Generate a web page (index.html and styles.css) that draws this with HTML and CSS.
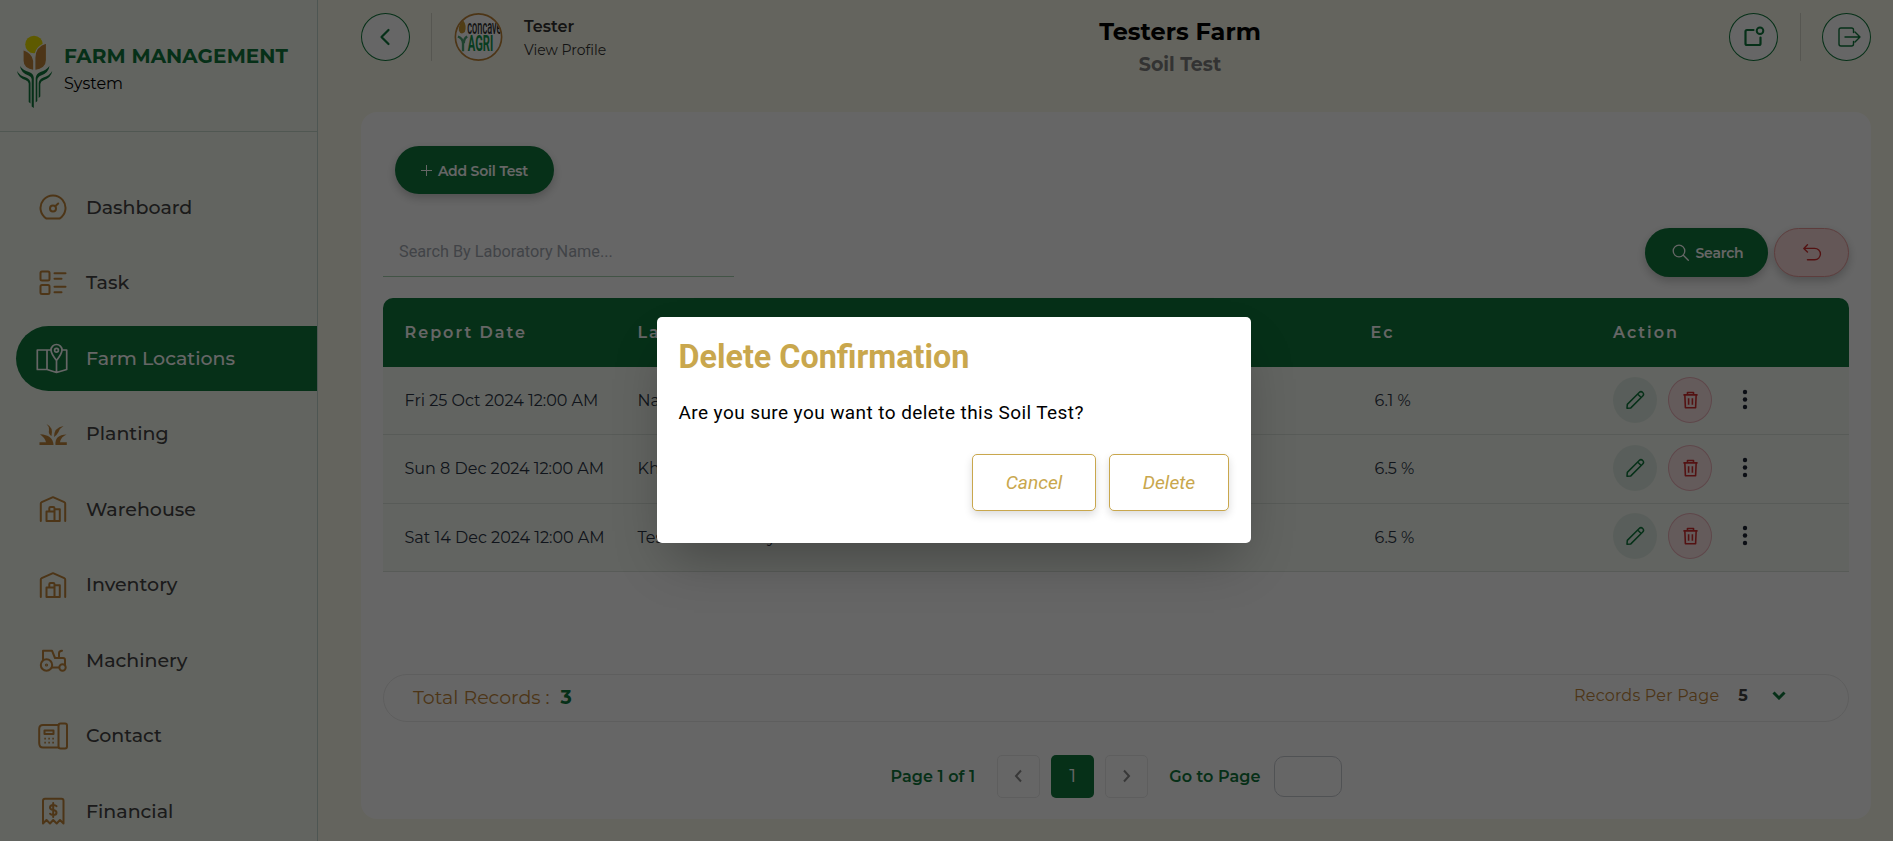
FILE: index.html
```html
<!DOCTYPE html>
<html lang="en">
<head>
<meta charset="utf-8">
<title>Soil Test</title>
<link rel="stylesheet" href="styles.css">
</head>
<body>
<svg class="defs" aria-hidden="true">
  <symbol id="barn" viewBox="0 0 28 28"><path d="M1.800 26V8.500Q1.800 7.600 2.700 7.200L14 2.200 25.300 7.200Q26.200 7.600 26.200 8.500V26"/><path d="M7.500 16.500H15.500V26H7.500ZM10.300 16.500V13.200Q10.300 12 11.500 12H14.300Q15.500 12 15.500 13.200V26M15.500 14.200H20.800V26H15.500"/></symbol>
  <symbol id="pen" viewBox="0 0 20 20"><path d="M2 18.200L2.300 14.400 14.200 2.500A2.400 2.400 0 0 1 17.700 6L5.800 17.900ZM12.900 4.200L15.900 7.200"/></symbol>
  <symbol id="bin" viewBox="0 0 18 20"><path d="M1.500 4.600H16.500M5.800 4.400V2H12.200V4.400M3 4.600L3.600 18.200H14.400L15 4.600M7 8.200V15M11 8.200V15"/></symbol>
  <symbol id="dots" viewBox="0 0 6 22"><circle cx="3" cy="3" r="2.200"/><circle cx="3" cy="10.500" r="2.200"/><circle cx="3" cy="18" r="2.200"/></symbol>
</svg>
<div class="app">
  <aside class="sidebar">
    <div class="brand">
      <svg class="logo" width="38" height="74" viewBox="0 0 38 74">
        <circle cx="19" cy="9.500" r="8.800" fill="#ece000"/>
        <path d="M8 14.500Q18 18 18.800 26V35.500Q8 34 8 26ZM31.500 8Q20 11 19.800 23V35.500Q31.500 34 31.500 25Z" fill="#c0863a" stroke="#f5f9f0" stroke-width="1.200"/>
        <g fill="#0f783c"><path d="M5 31Q8 35.500 14 37Q18.600 38.500 18.800 43V73L16.700 71.500V44Q16.500 41.500 13.500 40.500Q6 38 5 31ZM34.500 31Q31 35.500 25.500 37Q21.200 38.500 20.700 43V67.500L22.300 66V45Q22.500 42 26 40.500Q33.500 38 34.500 31ZM2 36Q5 41 11 42.500Q15.300 44 15.500 48V68.500L13.700 67V48.500Q13.500 46 10.500 45Q3 42.500 2 36ZM37.300 36Q34 41 28.500 42.500Q24 44 23.700 48V63L25.300 61.500V49Q25.500 46.500 28.500 45.200Q36 43 37.300 36Z"/></g>
      </svg>
      <div class="brand-text"><div class="brand-name">FARM MANAGEMENT</div><div class="brand-sub">System</div></div>
    </div>
    <nav class="nav">
      <a class="item"><svg class="ico" viewBox="0 0 28 28"><path d="M7.500 25.600A12.500 12.500 0 1 1 20.500 25.600Z"/><circle cx="14" cy="15.500" r="3"/><path d="M16.200 13.200L19.200 10.500"/></svg><span>Dashboard</span></a>
      <a class="item"><svg class="ico" viewBox="0 0 28 28"><rect x="1.500" y="2.500" width="9" height="9" rx="1.500"/><rect x="1.500" y="16" width="9" height="9" rx="1.500"/><path d="M15.500 4.300H26.500M15.500 9.700H22.500M15.500 17.800H26.500M15.500 23.200H22.500"/></svg><span>Task</span></a>
      <a class="item active"><svg class="ico map" viewBox="0 0 32 32"><path d="M11 8H1.300V27.500H11L20.500 30.500 30.700 27.500V8H26M11 27.500V8H15M20.500 18.500V30.500M20.500 18.500Q15 11.500 15 8A5.500 5.500 0 0 1 26 8Q26 11.500 20.500 18.500Z"/><circle cx="20.500" cy="8.200" r="1.900"/></svg><span>Farm Locations</span></a>
      <a class="item"><svg class="ico solid" viewBox="0 0 28 28"><path d="M.5 25H14.500Q14 15 1 14.300Q6 18 7 22.200H.5ZM16.500 25H27.800V22.200H21Q22 17 27.500 14.600Q15.500 15 16.500 25ZM15 17Q15 7.500 24.500 6Q21 8 19.500 12 18 15 15 17ZM12.500 16Q9 14 10 10 10 6 7.500 4Q14.500 7 12.500 16Z"/></svg><span>Planting</span></a>
      <a class="item"><svg class="ico"><use href="#barn"/></svg><span>Warehouse</span></a>
      <a class="item"><svg class="ico"><use href="#barn"/></svg><span>Inventory</span></a>
      <a class="item"><svg class="ico" viewBox="0 0 28 28"><circle cx="7.500" cy="19" r="5.700"/><circle cx="7.500" cy="19" r=".6"/><circle cx="23.500" cy="21.500" r="3.200"/><path d="M4 13.500V4.700H13L16 12H24Q26 12 26 14V19M13 21.500H20M20 12V7.200Q20 4.700 23 4.700"/></svg><span>Machinery</span></a>
      <a class="item"><svg class="ico phone" viewBox="0 0 30 28"><path d="M20.500 3H5Q1.200 3 1.200 7V21Q1.200 25.500 5 25.500H20.500"/><rect x="20.500" y="1.500" width="8.500" height="25" rx="2"/><rect x="6.500" y="8.500" width="9" height="3.500"/><path class="keys" d="M6.300 16.700h1.600M10.300 16.700h1.600M14.300 16.700h1.600M6.300 20.700h1.600M10.300 20.700h1.600M14.300 20.700h1.600"/></svg><span>Contact</span></a>
      <a class="item"><svg class="ico" viewBox="0 0 28 28"><path d="M4 26.500V3.700Q4 1.700 6 1.700H22.500Q24.500 1.700 24.500 3.700V26.500L21 23 17.700 26.500 14.200 23 11 26.500 7.500 23Z"/><path d="M17.500 9.200Q16.500 8 14.200 8 11 8 11 10.500 11 12.500 14.200 13 17.500 13.500 17.500 15.700 17.500 18 14.200 18 12 18 11 16.700M14.200 6V20"/></svg><span>Financial</span></a>
    </nav>
  </aside>
  <main class="main">
    <header class="top">
      <div class="group">
        <button class="round"><svg class="back" width="12" height="18" viewBox="0 0 12 18"><path d="M9.500 2L2.500 9L9.500 16" stroke-width="2.200"/></svg></button>
        <i class="sep"></i>
        <svg class="avatar" viewBox="0 0 49 49"><clipPath id="disc"><circle cx="24.500" cy="24.500" r="23"/></clipPath><circle cx="24.500" cy="24.500" r="23" fill="#fff"/><g clip-path="url(#disc)"><path d="M8.500 7Q3.500 13 4.500 18 6.500 23 10.500 19.500Q13 13 8.500 7Z" fill="#c89a35"/><path d="M3.500 24Q8.500 26 8.700 31V39M13 24Q9.500 26 9.500 31" fill="none" stroke="#4fa575" stroke-width="2.400"/><text class="av-a" x="13" y="21.500" textLength="35" lengthAdjust="spacingAndGlyphs">concave</text><text class="av-b" x="13.500" y="39" textLength="26" lengthAdjust="spacingAndGlyphs">AGRI</text></g><circle cx="24.500" cy="24.500" r="23.600" fill="none" stroke="#c0863a" stroke-width="1.700"/></svg>
        <div class="user"><b>Tester</b><span>View Profile</span></div>
      </div>
      <div class="title"><h1>Testers Farm</h1><h2>Soil Test</h2></div>
      <div class="group right">
        <button class="round"><svg width="22" height="22" viewBox="0 0 22 22"><path d="M10.500 4H4Q2.500 4 2.500 5.500V17.500Q2.500 19 4 19H16Q17.500 19 17.500 17.500V11.500" stroke-width="2.200"/><circle cx="17" cy="4.800" r="3.300" stroke-width="2"/></svg></button>
        <i class="sep"></i>
        <button class="round"><svg class="out" width="26" height="22" viewBox="0 0 26 22"><path d="M17.500 6.500V4Q17.500 2 15.500 2H5Q3 2 3 4V18Q3 20 5 20H15.500Q17.500 20 17.500 18V15.500M9 11H24M19 6L24 11 19 16" stroke-width="1.400"/></svg></button>
      </div>
    </header>
    <section class="card">
      <button class="btn add"><svg width="11" height="11" viewBox="0 0 11 11"><path d="M5.500 0V11M0 5.500H11"/></svg><span>Add Soil Test</span></button>
      <div class="tools">
        <div class="field">Search By Laboratory Name...</div>
        <div class="actions">
          <button class="btn find"><svg width="17" height="17" viewBox="0 0 17 17"><circle cx="7" cy="7" r="5.800"/><path d="M11.300 11.300L16.300 16.300"/></svg><span>Search</span></button>
          <button class="btn reset"><svg width="22" height="20" viewBox="0 0 22 20"><path d="M6 1.500L2 5.500 6 9.500M2 5.500H14A6.200 6.200 0 0 1 14 18H6"/></svg></button>
        </div>
      </div>
      <div class="table">
        <div class="row head"><span>Report Date</span><span>Laboratory Name</span><span>Ec</span><span>Action</span></div>
        <div class="row"><span>Fri 25 Oct 2024 12:00 AM</span><span>National</span><span class="ec">6.1 %</span><span class="acts"><i class="edit"><svg><use href="#pen"/></svg></i><i class="del"><svg><use href="#bin"/></svg></i><svg class="more"><use href="#dots"/></svg></span></div>
        <div class="row"><span>Sun 8 Dec 2024 12:00 AM</span><span>Khan</span><span class="ec">6.5 %</span><span class="acts"><i class="edit"><svg><use href="#pen"/></svg></i><i class="del"><svg><use href="#bin"/></svg></i><svg class="more"><use href="#dots"/></svg></span></div>
        <div class="row"><span>Sat 14 Dec 2024 12:00 AM</span><span>Tester Laboratory</span><span class="ec">6.5 %</span><span class="acts"><i class="edit"><svg><use href="#pen"/></svg></i><i class="del"><svg><use href="#bin"/></svg></i><svg class="more"><use href="#dots"/></svg></span></div>
      </div>
      <div class="summary">
        <div class="total"><span>Total Records :</span><b>3</b></div>
        <div class="per"><span>Records Per Page</span><b>5</b><svg width="14" height="9" viewBox="0 0 14 9"><path d="M1.500 1.500L7 7L12.500 1.500"/></svg></div>
      </div>
      <div class="pager">
        <span class="pages">Page 1 of 1</span>
        <i class="box"><svg width="9" height="14" viewBox="0 0 9 14"><path d="M7 1.500L2 7 7 12.500"/></svg></i>
        <i class="box on">1</i>
        <i class="box"><svg width="9" height="14" viewBox="0 0 9 14"><path d="M2 1.500L7 7 2 12.500"/></svg></i>
        <span class="goto">Go to Page</span>
        <i class="goin"></i>
      </div>
    </section>
  </main>
</div>
<div class="overlay">
  <div class="modal">
    <h3>Delete Confirmation</h3>
    <p>Are you sure you want to delete this Soil Test?</p>
    <div class="modal-actions"><button class="cancel">Cancel</button><button class="delete">Delete</button></div>
  </div>
</div>
</body>
</html>
```
FILE: styles.css
```css
* { box-sizing: border-box; }
body { margin: 0; height: 841px; overflow: hidden; font-family: Montserrat, Inter, "Open Sans", sans-serif; color: #444; }
h1, h2, h3, p { margin: 0; }
button { font: inherit; padding: 0; }
i { font-style: normal; }
.defs { position: absolute; width: 0; height: 0; }
.app { display: flex; height: 841px; background: #fbfbea; }

.sidebar { width: 318px; flex: none; background: #f5f9f0; border-right: 1px solid #c4d6cf; overflow: hidden; }
.brand { height: 132px; border-bottom: 1px solid #c9d9cd; display: flex; padding: 35px 0 0 15px; gap: 11px; }
.logo { flex: none; }
.brand-name { margin-top: 8px; font-size: 20px; line-height: 26px; font-weight: 700; color: #0f783c; letter-spacing: .1px; white-space: nowrap; }
.brand-sub { margin-top: 2px; font-size: 16px; line-height: 26px; color: #000; }
.nav { padding: 42.600px 0 0 16px; display: flex; flex-direction: column; gap: 10.400px; }
.item { height: 65.150px; flex: none; display: flex; align-items: center; padding-left: 23px; gap: 19px; font-size: 19px; font-weight: 500; color: #444; border-radius: 33px 0 0 33px; }
.ico { width: 28px; height: 28px; flex: none; fill: none; stroke: #c0863a; stroke-width: 2; stroke-linecap: round; stroke-linejoin: round; }
.ico.map { width: 32px; height: 32px; margin: 0 -1px 0 -3px; stroke: #fff; stroke-width: 1.700; }
.ico.phone { width: 30px; margin: 0 -1px; }
.ico .keys { stroke-linecap: butt; stroke-width: 1.700; }
.ico.solid { fill: #c0863a; stroke: none; }
.item.active { background: #0f783c; color: #fff; }

.main { flex: 1; padding: 13px 22px 22px 43px; }
.top { height: 99px; display: grid; grid-template-columns: 1fr auto 1fr; align-items: start; }
.group { display: flex; align-items: center; height: 48px; }
.round { width: 49px; height: 48px; border: 1px solid #0f783c; border-radius: 50%; background: #fff; display: flex; align-items: center; justify-content: center; }
.round svg { fill: none; stroke: #0f783c; stroke-linecap: round; stroke-linejoin: round; }
.round .back { margin-right: 1px; }
.round .out { margin-left: 5px; }
.sep { width: 1px; height: 48px; background: #d6d6ca; margin: 0 22px 0 21px; }
.right { justify-content: flex-end; }
.right .sep { margin: 0 21px 0 22px; }
.avatar { width: 49px; height: 48px; }
.av-a { font: 500 20px Roboto, sans-serif; fill: #333; }
.av-b { font: 700 22px Roboto, sans-serif; fill: #15964f; }
.user { margin-left: 21px; padding-top: 3px; color: #333; display: flex; flex-direction: column; }
.user b { font-size: 16px; line-height: 22px; font-weight: 600; }
.user span { font-size: 14px; line-height: 24px; }
.title { text-align: center; padding-left: 128px; }
.title h1 { font-size: 24px; line-height: 38px; font-weight: 700; color: #000; }
.title h2 { font-size: 19px; line-height: 27px; font-weight: 700; color: #808080; }

.card { height: 707px; background: #fff; border-radius: 16px; padding: 34px 22px 0; }
.btn { border: 0; border-radius: 25px; display: flex; align-items: center; justify-content: center; font-size: 14px; font-weight: 600; color: #fff; background: #0f783c; box-shadow: 0 4px 10px rgba(0,0,0,.22); }
.btn span { letter-spacing: -.2px; padding-top: 1px; }
.btn svg { fill: none; stroke: #fff; stroke-width: 1.300; stroke-linecap: round; }
.add { width: 159px; height: 48px; margin-left: 12px; gap: 6px; }
.add svg { stroke-width: 1; stroke-linecap: butt; }
.tools { margin-top: 34px; height: 49px; display: flex; justify-content: space-between; }
.field { width: 351px; padding-left: 16px; border-bottom: 1px solid #a5d3ae; font: 16.250px/48px Roboto, sans-serif; color: #a4a9b2; }
.actions { display: flex; gap: 6px; }
.find { width: 123px; gap: 7px; padding-left: 2px; }
.reset { width: 75px; background: #f9d9d9; border: 1px solid #e99a9a; }
.reset svg { width: 20px; height: 19px; stroke: #d02f2f; stroke-width: 1.500; stroke-linejoin: round; }

.table { margin-top: 21px; border-radius: 10px 10px 0 0; overflow: hidden; }
.row { height: 68.300px; padding: 0 22px 0 21.500px; display: grid; grid-template-columns: 233px 733px 242.500px 1fr; align-items: center; background: #f5f9f2; border-bottom: 1px solid #dde3dc; font-size: 16px; color: #2a3444; white-space: nowrap; }
.row.head { height: 69px; padding-top: 11px; align-items: start; line-height: 48px; background: #0f783c; color: #fff; border: 0; font-weight: 600; font-size: 16px; letter-spacing: 2px; }
.ec { padding-left: 4px; }
.acts { display: flex; align-items: center; margin-top: -2px; }
.edit, .del { width: 44px; height: 46px; border-radius: 50%; display: flex; align-items: center; justify-content: center; }
.edit { background: #dfece3; margin-right: 11px; }
.del { background: #fbe3e4; border: 1px solid #eab0b8; }
.acts svg { width: 20px; height: 20px; fill: none; stroke: #0f783c; stroke-width: 1.500; stroke-linejoin: round; }
.acts .del svg { width: 17px; stroke: #d02f2f; stroke-width: 1.700; }
.acts .more { width: 6px; height: 22px; margin-left: 30px; fill: #1c2333; stroke: none; }

.summary { margin-top: 102px; height: 48px; border: 1px solid #ebebeb; border-radius: 24px; padding: 0 62px 0 29px; display: flex; justify-content: space-between; align-items: center; color: #c0863a; }
.total { display: flex; align-items: center; font-size: 19px; gap: 11px; white-space: nowrap; }
.total b { color: #0f783c; font-weight: 700; }
.per { display: flex; align-items: center; font-size: 16px; letter-spacing: .2px; padding-bottom: 5px; }
.per b { color: #444; margin: 0 24px 0 19px; font-weight: 700; }
.per svg { fill: none; stroke: #0f783c; stroke-width: 3; }
.pager { margin-top: 33px; height: 43px; display: flex; align-items: center; justify-content: center; color: #0f783c; font-size: 16px; font-weight: 600; letter-spacing: .08px; }
.box { width: 43px; height: 43px; border: 1px solid #ebebeb; border-radius: 5px; margin-right: 11px; display: flex; align-items: center; justify-content: center; }
.box svg { fill: none; stroke: #8c8c8c; stroke-width: 2; }
.box.on { background: #0f783c; border: 0; color: #fff; font-size: 19px; font-weight: 400; padding-bottom: 2px; }
.pages { margin-right: 22px; }
.goto { margin: 0 13px 0 10px; }
.goin { width: 68px; height: 41px; border: 1px solid #c8ccd2; border-radius: 10px; }

.overlay { position: absolute; inset: 0; background: rgba(0,0,0,.6); display: flex; align-items: flex-start; justify-content: center; padding: 317px 0 0 15px; }
.modal { width: 594px; height: 226px; background: #fff; border-radius: 5px; padding: 19px 22px 0 21.500px; font-family: Roboto, sans-serif; box-shadow: 0 25px 50px -12px rgba(0,0,0,.3); }
.modal h3 { font-size: 32.300px; line-height: 42px; font-weight: 700; color: #c9a74d; }
.modal p { margin-top: 20px; font-size: 19px; line-height: 30px; color: #000; letter-spacing: .42px; white-space: nowrap; }
.modal-actions { margin-top: 26px; display: flex; justify-content: flex-end; gap: 13px; }
.modal-actions button { height: 57px; border: 1px solid #c9a74d; border-radius: 5px; background: #fff; color: #c9a74d; font-style: italic; font-size: 19.200px; box-shadow: 0 4px 8px rgba(0,0,0,.14); }
.cancel { width: 124px; }
.delete { width: 120px; }
```
